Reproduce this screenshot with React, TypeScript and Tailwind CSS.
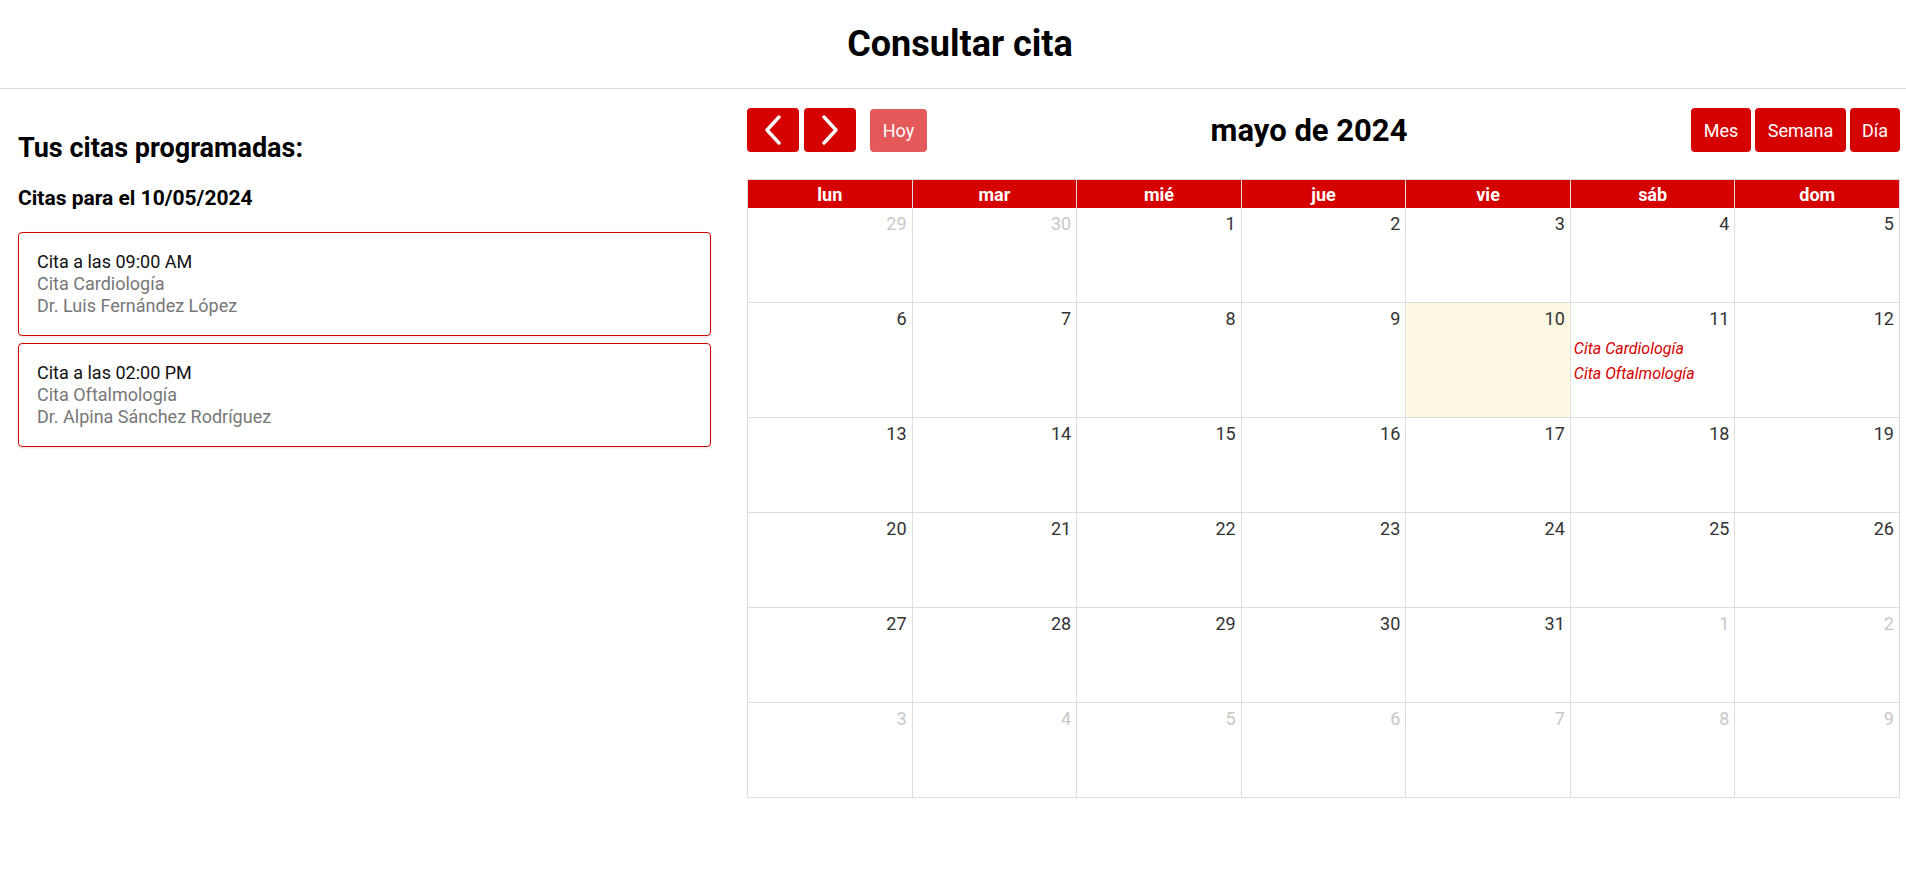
import React from "react";

type Day = { n: number; other?: boolean; today?: boolean; events?: string[] };

const weeks: Day[][] = [
  [{ n: 29, other: true }, { n: 30, other: true }, { n: 1 }, { n: 2 }, { n: 3 }, { n: 4 }, { n: 5 }],
  [
    { n: 6 },
    { n: 7 },
    { n: 8 },
    { n: 9 },
    { n: 10, today: true },
    { n: 11, events: ["Cita Cardiología", "Cita Oftalmología"] },
    { n: 12 },
  ],
  [{ n: 13 }, { n: 14 }, { n: 15 }, { n: 16 }, { n: 17 }, { n: 18 }, { n: 19 }],
  [{ n: 20 }, { n: 21 }, { n: 22 }, { n: 23 }, { n: 24 }, { n: 25 }, { n: 26 }],
  [{ n: 27 }, { n: 28 }, { n: 29 }, { n: 30 }, { n: 31 }, { n: 1, other: true }, { n: 2, other: true }],
  [3, 4, 5, 6, 7, 8, 9].map((n) => ({ n, other: true })),
];

const dayNames = ["lun", "mar", "mié", "jue", "vie", "sáb", "dom"];

const citas = [
  { hora: "09:00 AM", tipo: "Cita Cardiología", doctor: "Dr. Luis Fernández López" },
  { hora: "02:00 PM", tipo: "Cita Oftalmología", doctor: "Dr. Alpina Sánchez Rodríguez" },
];

function Chevron({ dir }: { dir: "left" | "right" }) {
  return (
    <svg width="18" height="30" viewBox="0 0 18 30" fill="none">
      <path
        d={dir === "left" ? "M15 2 L3 15 L15 28" : "M3 2 L15 15 L3 28"}
        stroke="white"
        strokeWidth="3.4"
        strokeLinecap="round"
        strokeLinejoin="round"
      />
    </svg>
  );
}

export default function App() {
  return (
    <div className="min-h-screen bg-white text-black font-['Roboto',sans-serif]">
      <header className="flex h-[89px] items-center justify-center border-b border-[#dddddd] pl-[14px]">
        <h1 className="text-[36px] leading-none font-bold">Consultar cita</h1>
      </header>

      <div className="flex pt-[19px] pl-[18px] pr-[6px]">
        {/* Lista de citas */}
        <div className="w-[693px] shrink-0 pt-[25px]">
          <h2 className="text-[27px] leading-[30px] font-bold">Tus citas programadas:</h2>
          <h3 className="mt-[23px] text-[21px] leading-[25px] font-bold">Citas para el 10/05/2024</h3>
          <div className="mt-[21px] flex flex-col gap-[7px]">
            {citas.map((c) => (
              <div
                key={c.hora}
                className="rounded-[4px] border border-[#d50000] px-[18px] py-[18px] text-[18px] leading-[22px] shadow-[0_1px_3px_rgba(0,0,0,0.12)]"
              >
                <div className="text-[#111]">Cita a las {c.hora}</div>
                <div className="text-[#777]">{c.tipo}</div>
                <div className="text-[#777]">{c.doctor}</div>
              </div>
            ))}
          </div>
        </div>

        {/* Calendario */}
        <div className="ml-[36px] w-[1153px] shrink-0">
          <div className="flex h-[44px] items-center justify-between">
            <div className="flex h-full items-center">
              <button className="flex h-[44px] w-[52px] items-center justify-center rounded-[4px] bg-[#d50000]">
                <Chevron dir="left" />
              </button>
              <button className="ml-[5px] flex h-[44px] w-[52px] items-center justify-center rounded-[4px] bg-[#d50000]">
                <Chevron dir="right" />
              </button>
              <button className="ml-[14px] h-[43px] w-[57px] rounded-[4px] bg-[#e45959] text-[18px] text-white">
                Hoy
              </button>
            </div>
            <h2 className="text-[31px] leading-none font-bold">mayo de 2024</h2>
            <div className="flex h-full items-center gap-[4px]">
              <button className="h-[44px] w-[60px] rounded-[4px] bg-[#d50000] text-[18px] text-white">Mes</button>
              <button className="h-[44px] w-[91px] rounded-[4px] bg-[#d50000] text-[18px] text-white">Semana</button>
              <button className="h-[44px] w-[50px] rounded-[4px] bg-[#d50000] text-[18px] text-white">Día</button>
            </div>
          </div>

          <div className="mt-[27px] border-l border-[#dddddd]">
            <div className="grid h-[29px] grid-cols-7 bg-[#d50000]">
              {dayNames.map((d) => (
                <div
                  key={d}
                  className="flex items-center justify-center border-r border-t border-[#dddddd] text-[18px] font-bold text-white"
                >
                  {d}
                </div>
              ))}
            </div>
            {weeks.map((week, wi) => (
              <div key={wi} className={`grid grid-cols-7 ${wi === 1 ? "h-[115px]" : "h-[95px]"}`}>
                {week.map((day, di) => (
                  <div
                    key={di}
                    className={`border-r border-b border-[#dddddd] ${day.today ? "bg-[#fdf8e1]" : ""}`}
                  >
                    <div
                      className={`pt-[5px] pr-[5px] text-right text-[18px] leading-[22px] ${
                        day.other ? "text-[#c8c8c8]" : "text-[#333]"
                      }`}
                    >
                      {day.n}
                    </div>
                    {day.events && (
                      <div className="mt-[6px] flex flex-col pl-[3px]">
                        {day.events.map((e) => (
                          <span key={e} className="text-[16px] leading-[25px] italic text-[#d50000]">
                            {e}
                          </span>
                        ))}
                      </div>
                    )}
                  </div>
                ))}
              </div>
            ))}
          </div>
        </div>
      </div>
    </div>
  );
}
